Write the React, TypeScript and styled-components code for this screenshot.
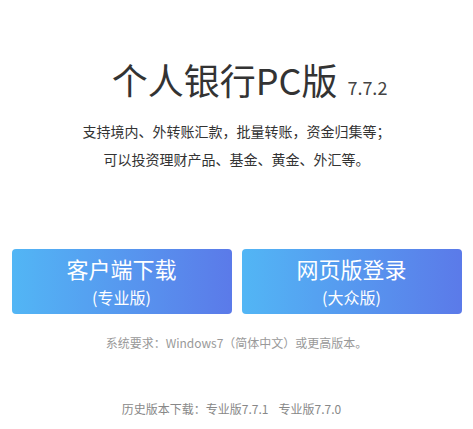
import React from 'react';
import styled, { createGlobalStyle } from 'styled-components';

const GlobalStyle = createGlobalStyle`
  html, body {
    margin: 0;
    padding: 0;
    background: #fff;
  }
  body {
    font-family: "Noto Sans CJK SC", "Noto Sans", sans-serif;
    color: #333;
  }
`;

const Page = styled.div`
  width: 450px;
  margin: 0 auto;
  padding-top: 57px;
  text-align: center;
`;

const Title = styled.h1`
  display: flex;
  justify-content: center;
  align-items: baseline;
  margin: 0;
  padding-left: 26px;
  height: 44px;
  font-size: 36px;
  line-height: 44px;
  font-weight: 400;
  color: #333;
`;

const Version = styled.span`
  margin-left: 10px;
  font-size: 18px;
  line-height: 20px;
  color: #444;
`;

const Intro = styled.div`
  margin-top: 16px;
  font-size: 14px;
  line-height: 28px;
  color: #333;
`;

const Actions = styled.div`
  display: grid;
  grid-template-columns: 1fr 1fr;
  gap: 10px;
  margin-top: 76px;
`;

const ActionButton = styled.a`
  display: flex;
  flex-direction: column;
  align-items: center;
  justify-content: center;
  height: 65px;
  border-radius: 4px;
  background: linear-gradient(90deg, #52b6f5 0%, #5b7ae9 100%);
  color: #fff;
  text-decoration: none;
  cursor: pointer;
`;

const ActionTitle = styled.span`
  font-size: 22px;
  line-height: 30px;
`;

const ActionSub = styled.span`
  font-size: 16px;
  line-height: 28px;
`;

const Requirement = styled.p`
  margin: 19px 0 0;
  font-size: 12px;
  line-height: 20px;
  color: #999;
`;

const History = styled.p`
  margin: 46px 0 0;
  padding-right: 10px;
  font-size: 12px;
  line-height: 20px;
  color: #888;
`;

const HistoryLink = styled.a<{ $gap?: number }>`
  margin-left: ${p => p.$gap ?? 0}px;
  color: #888;
  text-decoration: none;
`;

const App = () => (
  <>
    <GlobalStyle />
    <Page>
      <Title>
        个人银行PC版<Version>7.7.2</Version>
      </Title>

      <Intro>
        <div>支持境内、外转账汇款，批量转账，资金归集等；</div>
        <div>可以投资理财产品、基金、黄金、外汇等。</div>
      </Intro>

      <Actions>
        <ActionButton>
          <ActionTitle>客户端下载</ActionTitle>
          <ActionSub>(专业版)</ActionSub>
        </ActionButton>
        <ActionButton>
          <ActionTitle>网页版登录</ActionTitle>
          <ActionSub>(大众版)</ActionSub>
        </ActionButton>
      </Actions>

      <Requirement>系统要求：Windows7（简体中文）或更高版本。</Requirement>

      <History>
        历史版本下载：
        <HistoryLink>专业版7.7.1</HistoryLink>
        <HistoryLink $gap={10}>专业版7.7.0</HistoryLink>
      </History>
    </Page>
  </>
);

export default App;
